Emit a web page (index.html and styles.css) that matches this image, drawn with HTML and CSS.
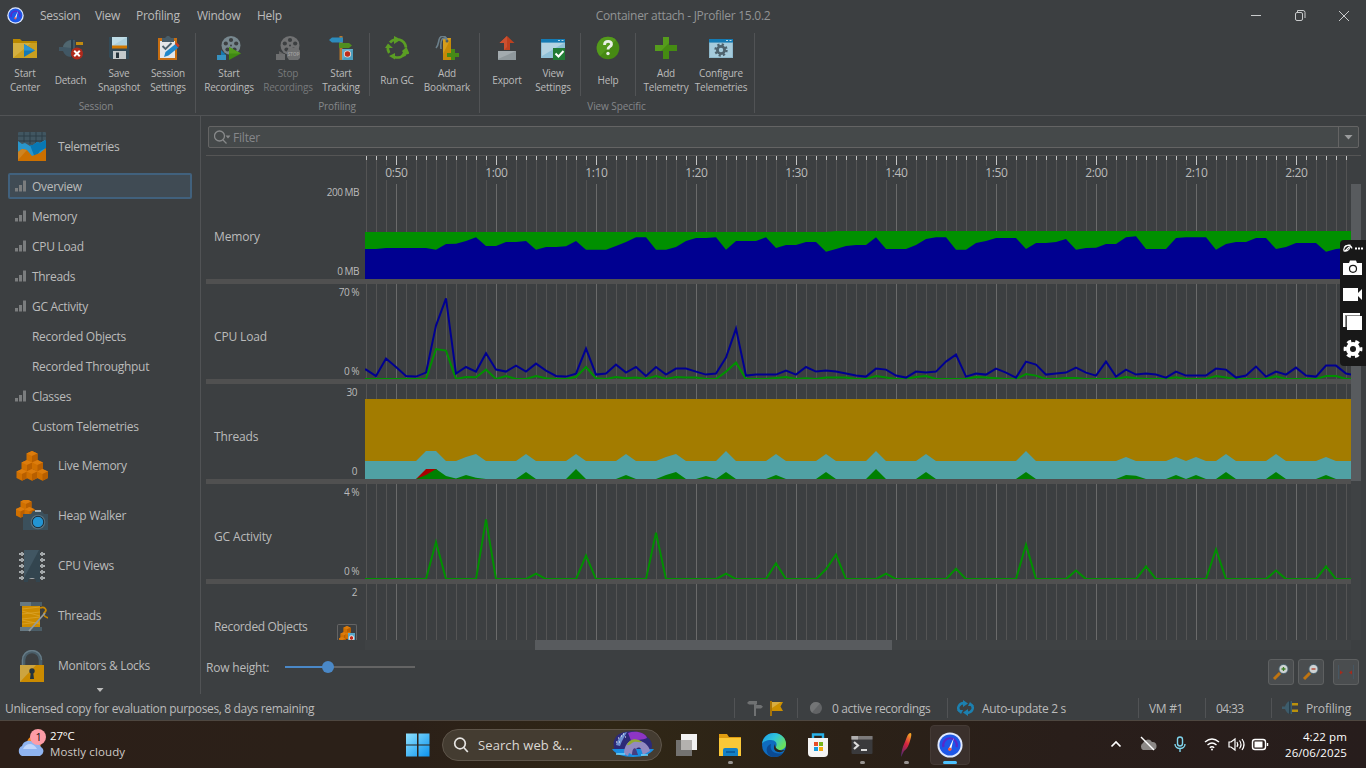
FILE: index.html
```html
<!DOCTYPE html>
<html lang="en">
<head>
<meta charset="utf-8">
<title>Container attach - JProfiler 15.0.2</title>
<link rel="stylesheet" href="styles.css">
</head>
<body>
<svg class="defs" width="0" height="0">
  <symbol id="gauge" viewBox="0 0 24 24">
    <circle cx="12" cy="12" r="11.6" fill="#dfe9ff"/><circle cx="12" cy="12" r="9.8" fill="#1d57e8"/>
    <path d="M6 14a6.3 6.3 0 1 1 12 0" fill="none" stroke="#5a28c8" stroke-width="2"/>
    <path d="M15.500 5.500 13 16h-2.400z" fill="#fff"/><circle cx="11.800" cy="16" r="1.600" fill="#ff5a3c"/>
  </symbol>
  <symbol id="bars" viewBox="0 0 12 12"><path d="M0 8h3v3.500H0zM4 5h3v6.500H4zM8 .5h3v11H8z" fill="#7b7d7e"/></symbol>
  <symbol id="cube" viewBox="0 0 12 12"><path d="M6 0l5.500 2.500v6.500L6 11.800.5 9V2.500z" fill="#d07000"/><path d="M6 0l5.500 2.500L6 5 .5 2.500z" fill="#dc7c0c"/><path d="M6 5l5.500-2.500V9L6 11.800z" fill="#b85f00"/></symbol>
  <symbol id="reel" viewBox="0 0 24 24">
    <circle cx="14" cy="9.500" r="9.500" fill="currentColor"/>
    <g fill="#3c3f41"><circle cx="14" cy="4" r="2.100"/><circle cx="19.200" cy="7.500" r="2.100"/><circle cx="17.500" cy="13.500" r="2.100"/><circle cx="10.500" cy="13.500" r="2.100"/><circle cx="8.800" cy="7.500" r="2.100"/><circle cx="14" cy="9.500" r="1"/></g>
  </symbol>
</svg>

<div class="window">
  <header class="titlebar">
    <svg class="app-icon" width="17" height="17"><use href="#gauge"/></svg>
    <nav class="menu"><span class="m1">Session</span><span class="m2">View</span><span class="m3">Profiling</span><span class="m4">Window</span><span>Help</span></nav>
    <div class="title">Container attach - JProfiler 15.0.2</div>
    <svg class="winbtns" width="110" height="16" viewBox="0 0 110 16" fill="none" stroke="#c9cbcc">
      <path d="M1 7.500h10"/><rect x="45.500" y="4.500" width="7" height="8" rx="1.500"/><path d="M47.500 4V2.500h5.500a2 2 0 0 1 2 2V10"/><path d="M89 3l10 10M99 3L89 13"/>
    </svg>
  </header>

  <section class="ribbon">
    <div class="group g1">
      <div class="btns">
        <div class="btn w50"><svg width="24" height="24" viewBox="0 0 24 24"><path d="M0 3h7l2 2h15v17H0z" fill="#b98800"/><path d="M0 7h24v15H0z" fill="#c99f20"/><path d="M0 22L18 7H0z" fill="#d4b040"/><path d="M11 8l11 6.500L11 21z" fill="#1378b5"/><path d="M11 8l11 6.500H11z" fill="#2f95cf"/></svg><span>Start<br>Center</span></div>
        <div class="btn w41"><svg width="24" height="24" viewBox="0 0 24 24"><path d="M17 6h7v3h-7z" fill="#c08a10"/><path d="M0 11h4c1-4 4-7 8-7h4v17h-4c-4 0-7-3-8-6H0z" fill="#415764"/><path d="M12 3h2v19h-2z" fill="#2c3e49"/><path d="M4 11c1-4 4-6 8-7v8z" fill="#50666f"/><circle cx="18" cy="17.500" r="6" fill="#b02a1c"/><path d="M15.200 14.700l5.600 5.600m0-5.600l-5.600 5.600" stroke="#fff" stroke-width="2"/></svg><span>Detach</span></div>
        <div class="btn w56"><svg width="24" height="24" viewBox="0 0 24 24"><path d="M2 1h20v22H4l-2-2z" fill="#334a57"/><path d="M5 1h15v10H5z" fill="#abcfdc"/><path d="M5 1h15L5 10z" fill="#bfdde7"/><path d="M5 9.500h15v3H5z" fill="#d07800"/><path d="M6 15h13v8H6z" fill="#c4cacc"/><path d="M9 16.500h3V22H9z" fill="#26343d"/></svg><span>Save<br>Snapshot</span></div>
        <div class="btn w42"><svg width="24" height="24" viewBox="0 0 24 24"><path d="M2 2h19v22H2z" fill="#c86e10"/><path d="M4 5h15v17H4z" fill="#e3e6e8"/><path d="M6 2h3l2-2h2l2 2h3v4H6z" fill="#475c68"/><path d="M6.500 10l3 3 6-6" fill="none" stroke="#4d626e" stroke-width="1.800"/><path d="M8 21l1.500-5 10-8 3 3.500-10 8z" fill="#1f87c9"/><path d="M19 8l2-1.500 2.600 3L22 11.500z" fill="#c43b23"/></svg><span>Session<br>Settings</span></div>
      </div>
      <div class="glabel">Session</div>
    </div>
    <div class="group g2">
      <div class="btns">
        <div class="btn w58"><svg class="c-reel" width="24" height="24" viewBox="0 0 24 24"><use href="#reel"/><path d="M0 19h9v5H0z" fill="#3791bf"/><path d="M4 14l5 5H4z" fill="#1678ad"/><path d="M12 11l12 6.500L12 24z" fill="#3f8a12"/><path d="M12 11l12 6.500H12z" fill="#529c1c"/></svg><span>Start<br>Recordings</span></div>
        <div class="btn w60 off"><svg class="c-off" width="24" height="24" viewBox="0 0 24 24"><use href="#reel"/><path d="M0 18h9v6H0zM13 12h9l3 4v5l-3 3h-9l-2-3v-6z" fill="#6e6f70"/><path d="M3 15l5 3H3z" fill="#666"/><text x="11.500" y="20" class="stop-text">STOP</text></svg><span>Stop<br>Recordings</span></div>
        <div class="btn w46"><svg width="24" height="24" viewBox="0 0 24 24"><path d="M10.500 0h3v24h-3z" fill="#b7762a"/><path d="M0 4l3-2.500h11v5H3z" fill="#2c8cbd"/><path d="M10 7h10l3 2.500-3 2.500H10z" fill="#508f1e"/><path d="M13 13h11v11H13z" fill="#4b9dbd"/><path d="M13 13h11L13 24z" fill="#62abc8"/><circle cx="18.500" cy="18" r="3.600" fill="#e8d8d4"/><circle cx="18.500" cy="18" r="2.700" fill="#bd2b18"/></svg><span>Start<br>Tracking</span></div>
      </div>
      <div class="btns sep">
        <div class="btn w44"><svg width="24" height="24" viewBox="0 0 24 24"><g fill="none" stroke="#5b9e24" stroke-width="2.700"><path d="M4.200 17A9.300 9.300 0 0 1 3 10"/><path d="M5 6.500a9.500 9.500 0 0 1 5-3"/><path d="M14 3.500a9.500 9.500 0 0 1 7 8"/><path d="M20.500 17a9.500 9.500 0 0 1-11 4"/></g><path d="M9 0l7 3.500L9 8zM17 15l4.500-4 3 6.500-5 1.500zM0 12l3-4.500L8 12zM10 17v6.500L4 20zM21 20l-6 1 4-6z" fill="#5b9e24"/></svg><span>Run GC</span></div>
        <div class="btn w56"><svg width="24" height="24" viewBox="0 0 24 24"><path d="M8 2h8v22H8z" fill="#c68a08"/><path d="M8 2h8L8 18z" fill="#d69d1b"/><circle cx="12" cy="5" r="1.500" fill="#4c5c64"/><path d="M12 4C11-1 5-1 4 4s-1 6-3 8M12 4C8 0 5 3 6 13" fill="none" stroke="#6b7f8a" stroke-width="1.600"/><path d="M16 13h4v4h4v4h-4v3h-4v-3h-4v-4h4z" fill="#468a16"/></svg><span>Add<br>Bookmark</span></div>
      </div>
      <div class="glabel">Profiling</div>
    </div>
    <div class="group g3">
      <div class="btns">
        <div class="btn w46"><svg width="24" height="24" viewBox="0 0 24 24"><path d="M3 15h18v9H3z" fill="#8f989c"/><path d="M3 15h18L3 23z" fill="#a3abaf"/><path d="M12 0l7.500 7H15v7H9V7H4.500z" fill="#bd401f"/><path d="M12 0L4.500 7H9v7l3-3z" fill="#cc5030"/></svg><span>Export</span></div>
        <div class="btn w46"><svg width="24" height="24" viewBox="0 0 24 24"><path d="M0 3h24v19H0z" fill="#8fc0d8"/><path d="M0 3h24v3.500H0z" fill="#147bb4"/><path d="M17 4h2v1h-2zM20.500 4h2v1h-2z" fill="#b8d8e8"/><path d="M1 7h22L1 20z" fill="#b3d3e2"/><path d="M12 12h12v12H12z" fill="#217a35"/><path d="M14.500 17.500l3 3 5-5.500" fill="none" stroke="#fff" stroke-width="2"/></svg><span>View<br>Settings</span></div>
      </div>
      <div class="btns sep help">
        <div class="btn w44"><svg width="24" height="24" viewBox="0 0 24 24"><circle cx="12" cy="12" r="11.300" fill="#468a13"/><path d="M4 20A11.300 11.300 0 0 1 20 4z" fill="#549a1c"/><path d="M8.500 9c0-5 7.500-4.500 7-.5-.3 2.300-3.500 2.300-3.500 5" fill="none" stroke="#e9efe5" stroke-width="2.800"/><circle cx="12" cy="17.500" r="1.700" fill="#e9efe5"/></svg><span>Help</span></div>
      </div>
      <div class="btns sep last">
        <div class="btn w56"><svg width="24" height="24" viewBox="0 0 24 24"><path d="M9 1h6v8h8v6h-8v8H9v-8H1V9h8z" fill="#458b12"/><path d="M9 1h6v6L7 15H1V9h8z" fill="#559c1c"/></svg><span>Add<br>Telemetry</span></div>
        <div class="btn w54"><svg width="24" height="24" viewBox="0 0 24 24"><path d="M0 3h24v19H0z" fill="#8fb9cc"/><path d="M0 3h24v3.500H0z" fill="#147bb4"/><path d="M1 7h22v14H1z" fill="#a5cbdc"/><path d="M17 4h2v1h-2zM20.500 4h2v1h-2z" fill="#b8d8e8"/><circle cx="12" cy="14" r="5.500" fill="none" stroke="#4e626d" stroke-width="2.400" stroke-dasharray="2.160 2.160"/><circle cx="12" cy="14" r="3.600" fill="none" stroke="#4e626d" stroke-width="2.800"/></svg><span>Configure<br>Telemetries</span></div>
      </div>
      <div class="glabel">View Specific</div>
    </div>
  </section>

  <div class="main">
    <aside class="sidebar">
      <div class="cat first"><svg width="32" height="32" viewBox="0 0 32 32"><rect x="2" y="2" width="28" height="29" rx="1" fill="#415661"/><path d="M8 2v10M14 2v12M20 2v12M26 2v10M2 6h28M2 11h28" stroke="#2d3d46"/><path d="M2 11l4 3 3-1 5 3 3-1 4-3 3 1 5-3v20H2z" fill="#2a96cb"/><path d="M14 15l3 0 4-3 3 1 6-3v8l-6 3-5 7z" fill="#0878b4"/><path d="M2 22l4-3 5 1 5 6 8-3 6-5v13H2z" fill="#cc7000"/><path d="M2 22l4-3 5 1L2 30z" fill="#cf8420"/></svg><span>Telemetries</span></div>
      <div class="item sel"><svg width="12" height="12"><use href="#bars"/></svg><span>Overview</span></div>
      <div class="item"><svg width="12" height="12"><use href="#bars"/></svg><span>Memory</span></div>
      <div class="item"><svg width="12" height="12"><use href="#bars"/></svg><span>CPU Load</span></div>
      <div class="item"><svg width="12" height="12"><use href="#bars"/></svg><span>Threads</span></div>
      <div class="item"><svg width="12" height="12"><use href="#bars"/></svg><span>GC Activity</span></div>
      <div class="item"><i></i><span>Recorded Objects</span></div>
      <div class="item"><i></i><span>Recorded Throughput</span></div>
      <div class="item"><svg width="12" height="12"><use href="#bars"/></svg><span>Classes</span></div>
      <div class="item"><i></i><span>Custom Telemetries</span></div>
      <div class="cat"><svg width="32" height="32" viewBox="0 0 32 32"><use href="#cube" x="10" y="1" width="12" height="12"/><use href="#cube" x="5" y="10" width="12" height="12"/><use href="#cube" x="15.500" y="10" width="12" height="12"/><use href="#cube" x="0" y="19" width="12" height="12"/><use href="#cube" x="10" y="19" width="12" height="12"/><use href="#cube" x="20.500" y="19" width="12" height="12"/></svg><span>Live Memory</span></div>
      <div class="cat"><svg width="32" height="32" viewBox="0 0 32 32"><use href="#cube" x="4" y="-1" width="12" height="12"/><use href="#cube" x="-1" y="7" width="11" height="11"/><use href="#cube" x="8" y="7" width="11" height="11"/><path d="M7 14h8l2-3h9l2 3h4v16H7z" fill="#3b505c"/><path d="M19 10h6v2h-6z" fill="#aab4b8"/><circle cx="22" cy="22" r="7.300" fill="#5a707b"/><circle cx="22" cy="22" r="5.700" fill="#2394d2" stroke="#1c2c36"/></svg><span>Heap Walker</span></div>
      <div class="cat"><svg width="32" height="32" viewBox="0 0 32 32"><path d="M3 4h26M3 10h26M3 16h26M3 22h26M3 28h26" stroke="#a7abad" stroke-width="2"/><path d="M6 2v4M26 2v4M6 8v4M26 8v4M6 14v4M26 14v4M6 20v4M26 20v4M6 26v4M26 26v4" stroke="#a0a5a7" stroke-width="2"/><path d="M8 0h16v32h-4a4 4 0 0 0-8 0H8z" fill="#33454f"/><path d="M8 0h15L8 28z" fill="#415662"/></svg><span>CPU Views</span></div>
      <div class="cat"><svg width="32" height="32" viewBox="0 0 32 32"><path d="M4 2h22v4H4zM4 27h22v4H4z" fill="#4b5d67"/><path d="M4 2h11v4H4zM4 27h11v4H4z" fill="#667983"/><path d="M6 6h18v21H6z" fill="#cc8b00"/><path d="M6 9l18-2M6 14l18-2M6 19l18-2M6 24l18-2M6 11l18 5M6 20l18 4" stroke="#dba42c" stroke-width=".8"/><path d="M24 8c5-2 7 2 5 4s-2 4 3 6" fill="none" stroke="#c98800" stroke-width="1.800"/><path d="M13 31L29 13" stroke="#929a9e" stroke-width="1.800"/></svg><span>Threads</span></div>
      <div class="cat"><svg width="32" height="32" viewBox="0 0 32 32"><path d="M7.500 16V10a8.500 8.500 0 0 1 17 0v6" fill="none" stroke="#4a5e69" stroke-width="3.600"/><path d="M6.500 16V10a9.500 9.500 0 0 1 19 0" fill="none" stroke="#677c87" stroke-width="1.300"/><path d="M4 15h24v17H4z" fill="#cb8b00"/><path d="M4 15h16L4 32z" fill="#cca440"/><circle cx="16" cy="21" r="2.700" fill="#25343d"/><path d="M15 21h2l1 8h-4z" fill="#25343d"/></svg><span>Monitors &amp; Locks</span></div>
      <div class="more"></div>
    </aside>

    <section class="content">
      <div class="filter"><svg width="17" height="15" viewBox="0 0 17 15" fill="none" stroke="#87898a"><circle cx="5.500" cy="6" r="5" stroke-width="1.300"/><path d="M9 10l3.500 3.500" stroke-width="1.300"/><path d="M11.500 5.500h5L14 8.500z" fill="#87898a" stroke="none"/></svg><span>Filter</span><div class="drop"><b></b></div></div>
      <div class="panel">
        <div class="plots">
          <div class="row axis"><div class="names"></div><svg id="axis" width="986" height="28"></svg></div>
          <div class="row"><div class="names"><span class="hi">200 MB</span><span class="nm">Memory</span><span class="lo">0 MB</span></div><svg id="memory" width="986" height="95"></svg></div>
          <div class="row"><div class="names"><span class="hi">70 %</span><span class="nm">CPU Load</span><span class="lo">0 %</span></div><svg id="cpu" width="986" height="95"></svg></div>
          <div class="row"><div class="names in"><span class="hi">30</span><span class="nm">Threads</span><span class="lo">0</span></div><svg id="threads" width="986" height="95"></svg></div>
          <div class="row"><div class="names"><span class="hi">4 %</span><span class="nm">GC Activity</span><span class="lo">0 %</span></div><svg id="gc" width="986" height="95"></svg></div>
          <div class="row cut"><div class="names in"><span class="hi">2</span><span class="nm">Recorded Objects</span><span class="rec"><svg width="16" height="16" viewBox="0 0 16 16"><use href="#cube" x="4" y="0" width="8" height="8"/><use href="#cube" x="1" y="6" width="8" height="8"/><use href="#cube" x="6" y="6" width="8" height="8"/><use href="#cube" x="-1" y="11" width="8" height="8"/><path d="M9 7h7v9H9z" fill="#58a8c8"/><circle cx="12.500" cy="12" r="2.300" fill="#c02818" stroke="#eee"/></svg></span></div><svg id="recorded" width="986" height="56"></svg></div>
        </div>
        <div class="vscroll"><b></b></div>
      </div>
      <div class="hscroll"><b></b></div>
      <div class="controls">
        <span>Row height:</span>
        <div class="slider"><i></i><b></b></div>
        <div class="zooms">
          <div class="zb"><svg width="20" height="20" viewBox="0 0 20 20"><path d="M3 17l6-6" stroke="#bf7410" stroke-width="3"/><circle cx="12.500" cy="7" r="4.600" fill="#cfd3d4" stroke="#47606d"/><path d="M10.500 7h4M12.500 5v4" stroke="#3d7d28" stroke-width="1.300"/></svg></div>
          <div class="zb"><svg width="20" height="20" viewBox="0 0 20 20"><path d="M3 17l6-6" stroke="#bf7410" stroke-width="3"/><circle cx="12.500" cy="7" r="4.600" fill="#cfd3d4" stroke="#47606d"/><path d="M10.500 7h4" stroke="#b23a22" stroke-width="1.300"/></svg></div>
          <div class="zb fit"><svg width="20" height="20" viewBox="0 0 20 20"><path d="M2.500 3v14M17.500 3v14" stroke="#465662"/><path d="M4 8.500l3 2-3 2zM16 8.500l-3 2 3 2z" fill="#a52a1c"/></svg></div>
        </div>
      </div>
    </section>
  </div>

  <footer class="status">
    <span class="license">Unlicensed copy for evaluation purposes, 8 days remaining</span>
    <div class="st s1"><svg width="40" height="18" viewBox="0 0 40 18"><path d="M7 2h2v15H7zM0 4l2-2h8v3.500H2zM7 6h7l2 1.800L14 9.500H7z" fill="#6f7172"/><path d="M23 2h2v15h-2z" fill="#a87408"/><path d="M25 3h11l-2.500 4.500L36 12H25z" fill="#cc9000"/><path d="M25 3h9L25 9z" fill="#d8ad40"/></svg></div>
    <div class="st s2"><svg width="14" height="14" viewBox="0 0 14 14"><circle cx="7" cy="7" r="6" fill="#626466"/><path d="M3 11.500A6 6 0 0 1 11 2.500z" fill="#737576"/></svg><span>0 active recordings</span></div>
    <div class="st s3"><svg width="17" height="16" viewBox="0 0 17 16"><path d="M3 11.500A6 5 0 0 1 7 3M14 4.500A6 5 0 0 1 10 13" fill="none" stroke="#1c80b0" stroke-width="2.500"/><path d="M6 0l5 3.500L6 7zM11 9v7l-5-3.500zM0 10h6l-2 4zM17 6h-6l2-4z" fill="#1c80b0"/></svg><span>Auto-update 2 s</span></div>
    <div class="st s4"><span>VM #1</span></div>
    <div class="st s5"><span>04:33</span></div>
    <div class="st s6"><svg width="16" height="16" viewBox="0 0 16 16"><path d="M10 3h6v2.500h-6zM10 9.500h6V12h-6z" fill="#ba910c"/><path d="M0 6.500h3C4 3 6 1 9 1h1v13H9c-3 0-5-2-6-5H0z" fill="#3d5c6b"/><path d="M7 1h1.500v13H7z" fill="#273e4b"/></svg><span>Profiling</span></div>
  </footer>
</div>

<div class="taskbar">
  <div class="weather"><svg width="34" height="34" viewBox="0 0 34 34"><circle cx="18" cy="15" r="7" fill="#f08a18"/><path d="M6 28a5.500 5.500 0 0 1 0-10 7 7 0 0 1 12-3 7 6 0 0 1 7 4 5 5 0 0 1-1 9z" fill="#8fb4f0"/><path d="M7 21c3-6 10-7 14 0z" fill="#c0d6fb"/><circle cx="22" cy="9" r="8" fill="#fd9ca6"/><text x="19.500" y="13" class="badge-text">1</text></svg><div><div class="temp">27°C</div><div class="cond">Mostly cloudy</div></div></div>
  <div class="apps">
    <svg class="start" width="24" height="24" viewBox="0 0 24 24"><defs><linearGradient id="wg" x2="1" y2="1"><stop stop-color="#8ee1ff"/><stop offset="1" stop-color="#0c93ee"/></linearGradient></defs><path d="M0 .5h11v11H0zM12.500 .5h11v11h-11zM0 12.500h11v11H0zM12.500 12.500h11v11h-11z" fill="url(#wg)"/></svg>
    <div class="search"><svg width="16" height="16" viewBox="0 0 16 16" fill="none" stroke="#e6e4e2" stroke-width="1.700"><circle cx="7" cy="6.500" r="5.300"/><path d="M10.800 10.500l4 4.500"/></svg><span>Search web &amp;...</span>
      <svg class="art" width="42" height="27" viewBox="0 0 42 27"><path d="M2 16C0 9 5 2 13 1c7-2 19 0 22 5 5 3 6 8 4 13H2z" fill="#2c2a78"/><path d="M16 2c8-3 18 0 19 5-5 3-9 0-15 5z" fill="#8d35c4"/><path d="M4 14c1-4 3-8 8-12l3-1c-2 4-5 8-7 14z" fill="#6f8fd0"/><path d="M6 7h1M9 5h1M7 11h1M11 3h1M13 6h1M4 11h1" stroke="#fff" stroke-width="1.200"/><path d="M0 18h42c-3 5-11 8-21 8S3 23 0 18z" fill="#188ce0"/><path d="M12 23c0-8 4-14 11-14 8 0 14 5 15 11l-7 4-2-6c-2-3-5-1-6 2l-2 4-4-2-1 3z" fill="#938ac0"/><path d="M20 24c0-5 2-8 4-6l2 6z" fill="#443d80"/><path d="M15 14c2-6 9-8 15-3-3 1-5-1-8 0s-4 4-7 3z" fill="#91a832"/><path d="M4 23h9M29 24h7" stroke="#6cd5ff" stroke-width="1.500"/></svg></div>
    <svg class="a-task" width="24" height="24" viewBox="0 0 24 24"><path d="M6 1h16v16H6z" fill="#f2f2f2"/><path d="M1 7h16v16H1z" fill="#737270"/><path d="M6 7h11v10H6z" fill="#b3b1af"/></svg>
    <div class="app"><svg width="26" height="26" viewBox="0 0 26 26"><path d="M2 2h8l2 3h12v19H2z" fill="#df9c10"/><path d="M2 6h22v18H2z" fill="#fac838"/><path d="M6 18q0-2 2-2h11q2 0 2 2v6H6z" fill="#1581c6"/><path d="M9 19h9v2H9z" fill="#0b5fa0"/></svg><i></i></div>
    <div class="app"><svg width="26" height="26" viewBox="0 0 26 26"><defs><linearGradient id="eg" x2="1" y2=".6"><stop stop-color="#1b9ce8"/><stop offset=".5" stop-color="#2fc4dc"/><stop offset="1" stop-color="#6be15a"/></linearGradient></defs><circle cx="13" cy="13" r="12" fill="#0f6cbf"/><path d="M1 12C2 4 8 1 13 1c8 0 12 6 12 11 0 4-3 6-7 6-3 0-4-1-3-3 2-4-1-7-5-7-5 0-8 2-9 4z" fill="url(#eg)"/><path d="M10 12c-2 7 4 11 12 9-2 3-5 4-9 4C5 25 3 14 10 12z" fill="#0b4a92"/><path d="M14 12c-2 4-1 7 3 8 3 .5 5-.5 7-2-1 0-4 1-6 0-3-1-4-3-4-6z" fill="#2c2418"/></svg></div>
    <div class="app"><svg width="26" height="26" viewBox="0 0 26 26"><path d="M8 8V2.500h10V8" fill="none" stroke="#27b2ea" stroke-width="2.400"/><path d="M3 6h20v15q0 4-4 4H7q-4 0-4-4z" fill="#f4f4f4"/><path d="M9 10h4v4H9z" fill="#e74c25"/><path d="M14 10h4v4h-4z" fill="#77b51a"/><path d="M9 15h4v4H9z" fill="#1599dc"/><path d="M14 15h4v4h-4z" fill="#f3aa10"/></svg></div>
    <div class="app"><svg width="26" height="26" viewBox="0 0 26 26"><rect x="2.500" y="4" width="21" height="18" rx="1" fill="#3a3a3c"/><path d="M2.500 4h21v3.500h-21z" fill="#7c7a7a"/><path d="M2.500 4H9v3.500H2.500z" fill="#b1afaf"/><path d="M5 10l4 3.500-4 3.500" fill="none" stroke="#ddd" stroke-width="2.200"/><path d="M12 18h6" stroke="#eee" stroke-width="1.800"/></svg><i></i></div>
    <div class="app"><svg width="26" height="26" viewBox="0 0 26 26"><defs><linearGradient id="fg" x1=".7" x2=".3" y2="1"><stop stop-color="#f2a024"/><stop offset=".45" stop-color="#d82340"/><stop offset="1" stop-color="#5a2a70"/></linearGradient></defs><path d="M17.500 1c2 0 0 7-1.500 11s-3.500 6-5 7l-3 6c0-4 1.500-10 3.500-14s3-10 6-10z" fill="url(#fg)"/></svg><i></i></div>
    <div class="app active"><svg width="26" height="26"><use href="#gauge"/></svg><i></i></div>
  </div>
  <div class="tray">
    <svg width="160" height="22" viewBox="0 0 160 22" fill="none" stroke="#fff" stroke-width="1.400">
      <path d="M1.500 12.500L6 8l4.500 4.500" stroke-width="1.700"/>
      <path d="M33 16a4 4 0 0 1 0-7 5 5 0 0 1 9-1 4 4 0 0 1 1 8z" fill="#8c8886" stroke="none"/><path d="M31 3l13 13"/>
      <g stroke="#7fd4ec"><rect x="67.500" y="3" width="5" height="9" rx="2.500"/><path d="M65 10c0 6 10 6 10 0M70 14v4"/></g>
      <path d="M95 8q7-6 14 0M97.500 11q4.500-4 9 0M99.800 13.800q2.200-2 4.400 0"/><circle cx="102" cy="15.500" r="1" fill="#fff" stroke="none"/>
      <path d="M119 8v5h2l4 3V5l-4 3zM127 8q1.500 2.500 0 5M129.500 6.500q3 4 0 8M132 5q4 5.500 0 11" stroke-width="1.200"/>
      <rect x="142.500" y="5.500" width="13" height="10" rx="2.500"/><path d="M144.500 7.500h8v6h-8z" fill="#fff" stroke="none"/><path d="M157.500 9v3"/>
    </svg>
    <div class="clock">4:22 pm<br>26/06/2025</div>
  </div>
</div>

<div class="capture">
  <svg width="26" height="126" viewBox="0 0 26 126">
    <path d="M4 11c-1-3 2-6 6-6 1 3-2 7-6 6zM5 11l4-4M4 7.500c2-3 7-3 8 1" fill="none" stroke="#fff" stroke-width="1.100"/>
    <path d="M15 7.500h2v2h-2zM18 7.500h2v2h-2zM21 7.500h2v2h-2z" fill="#fff"/>
    <path d="M3 23h6l1-2.500h6l1 2.500h5v12H3z" fill="#fff"/><circle cx="13" cy="28.800" r="3.500" fill="#fff" stroke="#181818" stroke-width="1.200"/>
    <path d="M3 48h15v13H3zM18 53l4-4v11l-4-4z" fill="#fff"/>
    <path d="M3 73h17v2H5.500v12H3z" fill="#fff"/><path d="M5.500 75H20v1H6.500v11h-1z" fill="#888"/><path d="M7 76h15v14H7z" fill="#fff"/>
    <circle cx="13" cy="109" r="7.800" fill="none" stroke="#fff" stroke-width="3.200" stroke-dasharray="4.080 4.080" stroke-dashoffset="2"/><circle cx="13" cy="109" r="5" fill="none" stroke="#fff" stroke-width="4"/>
  </svg>
</div>
<script src="charts.js"></script>
</body>
</html>
```
FILE: styles.css
```css
* { box-sizing: border-box; }
body { margin: 0; width: 1366px; height: 768px; overflow: hidden; background: #3c3f41; color: #bbb; font: 12px/16px "Open Sans", "Noto Sans", sans-serif; letter-spacing: -0.2px; position: relative; }
svg { display: block; flex: none; }
.defs { position: absolute; }
.window { height: 720px; display: flex; flex-direction: column; }

.titlebar { height: 31px; display: flex; align-items: center; position: relative; padding-left: 7px; }
.app-icon { margin-right: 16px; }
.menu { display: flex; letter-spacing: -0.3px; }
.m1 { width: 55px; } .m2 { width: 41px; } .m3 { width: 61px; } .m4 { width: 60px; }
.title { position: absolute; left: 0; right: 0; text-align: center; color: #929495; letter-spacing: -0.28px; }
.winbtns { margin-left: auto; margin-right: 6px; }

.ribbon { height: 85px; border-bottom: 1px solid #515355; display: flex; padding-top: 2px; }
.group { display: grid; grid-template-rows: 63px 17px; border-right: 1px solid #515355; height: 80px; }
.g1 { width: 196px; grid-template-columns: auto; }
.g2 { width: 284px; padding-left: 4px; grid-template-columns: 164px auto; }
.g3 { width: 275px; padding-left: 4px; grid-template-columns: 92px 54px auto; }
.btns { display: flex; grid-row: 1; padding-top: 4px; }
.btns.sep { border-left: 1px solid #515355; margin-left: 5px; padding-left: 5px; }
.btns.sep.help { margin-left: 4px; }
.btns.last { padding-left: 2px; }
.glabel { grid-row: 2; grid-column: 1 / -1; text-align: center; font-size: 10px; line-height: 21px; color: #85878a; letter-spacing: -0.1px; padding-right: 5px; }
.g1 .glabel { padding-right: 3px; }
.btn { display: flex; flex-direction: column; align-items: center; text-align: center; font-size: 10px; line-height: 14px; letter-spacing: -0.2px; white-space: nowrap; height: 59px; }
.btn svg { margin-top: -1px; }
.btn span { flex: 1; display: flex; align-items: center; padding-top: 3px; }
.btn.off { color: #77797b; }
.w41 { width: 41px; } .w42 { width: 42px; } .w44 { width: 44px; } .w46 { width: 46px; } .w50 { width: 50px; } .w54 { width: 54px; } .w56 { width: 56px; } .w58 { width: 58px; } .w60 { width: 60px; }
.c-reel { color: #78888f; } .c-off { color: #707172; }
.stop-text { font: bold 5px "Open Sans", sans-serif; fill: #999; }

.main { height: 579px; display: flex; }
.sidebar { width: 201px; height: 578px; border-right: 1px solid #515355; display: flex; flex-direction: column; letter-spacing: -0.3px; }
.cat { height: 50px; display: flex; align-items: center; padding-left: 16px; gap: 10px; }
.cat.first { height: 55px; padding-top: 6px; letter-spacing: -0.4px; }
.cat.first svg { margin-top: -1px; }
.item { height: 26px; margin: 2px 8px; padding-left: 6px; display: flex; align-items: center; gap: 5px; border: 1px solid transparent; }
.item span { padding-top: 1px; }
.item i { width: 12px; }
.item.sel { background: #404b54; border: 2px solid #41617d; border-radius: 2px; padding-left: 5px; }
.more { width: 7px; height: 4px; margin: -3px auto 0; background: #bbb; clip-path: polygon(0 0, 100% 0, 50% 100%); }

.content { flex: 1; padding: 10px 5px 0; }
.filter { height: 22px; margin: 0 2px; border: 1px solid #646464; background: #45494a; border-radius: 2px; display: flex; align-items: center; padding-left: 5px; gap: 2px; color: #85878a; }
.filter span { padding-top: 2px; }
.drop { margin-left: auto; align-self: stretch; width: 20px; border-left: 1px solid #646464; display: flex; align-items: center; justify-content: center; }
.drop b { width: 9px; height: 5px; background: #9a9c9d; clip-path: polygon(0 0, 100% 0, 50% 100%); }
.panel { margin-top: 7px; border-top: 1px solid #555; height: 485px; display: flex; overflow: hidden; }
.plots { width: 1145px; }
.row { display: flex; height: 100px; border-bottom: 5px solid #505050; }
.row.axis { height: 28px; border: 0; }
.row.cut { height: 56px; border: 0; }
.names { width: 159px; height: 95px; display: grid; grid-template-columns: 1fr auto; grid-template-rows: 17px 1fr 16px; padding: 0 6px 0 8px; }
.axis .names { height: 28px; }
.hi, .lo { grid-column: 2; font-size: 10px; text-align: right; letter-spacing: -0.5px; line-height: 17px; }
.lo { grid-row: 3; }
.in .hi, .in .lo { padding-right: 2px; }
.nm { grid-row: 2; grid-column: 1; align-self: center; padding-top: 9px; white-space: nowrap; letter-spacing: -0.15px; }
.cut .names { height: 56px; grid-template-rows: 17px 1fr; }
.cut .nm { padding-top: 11px; letter-spacing: -0.33px; }
.rec { grid-row: 2; grid-column: 2; justify-self: end; width: 20px; height: 17px; margin: 23px 2px 0 0; border: 1px solid #646464; border-bottom: 0; border-radius: 2px 2px 0 0; padding: 1px; overflow: hidden; align-self: end; }
.vscroll { width: 10px; margin-top: 28px; background: #3f4244; }
.vscroll b { display: block; height: 297px; background: #585b5e; }
.hscroll { height: 10px; width: 986px; margin-left: 159px; background: #3f4244; padding-left: 170px; }
.hscroll b { display: block; width: 357px; height: 10px; background: #585b5e; }
.tick { font: 12px "Open Sans", sans-serif; fill: #bbb; letter-spacing: -0.4px; }
.controls { display: flex; align-items: center; height: 34px; }
.controls > span { width: 64px; padding-top: 1px; white-space: nowrap; }
.slider { width: 130px; height: 12px; margin-left: 15px; display: grid; align-items: center; }
.slider i { grid-area: 1/1; height: 2px; background: linear-gradient(90deg, #4a88c7 43px, #646464 43px); }
.slider b { grid-area: 1/1; width: 12px; height: 12px; border-radius: 6px; background: #4a88c7; margin-left: 37px; }
.zooms { margin-left: auto; margin-right: 2px; display: flex; gap: 4px; padding-top: 10px; }
.zb { width: 26px; height: 26px; border: 1px solid #5e6061; border-radius: 3px; background: #4a4d4f; padding: 2px; }
.zb.fit { margin-left: 5px; }

.status { height: 25px; display: flex; align-items: center; padding-left: 5px; }
.license { width: 729px; letter-spacing: -0.35px; padding-top: 2px; }
.st { height: 20px; border-left: 1px solid #515355; display: flex; align-items: center; }
.st span { padding-top: 2px; }
.s1 { width: 63px; padding-left: 12px; }
.s2 { width: 150px; padding-left: 11px; gap: 9px; letter-spacing: -0.35px; }
.s3 { width: 191px; padding-left: 9px; gap: 8px; letter-spacing: -0.33px; }
.s4 { width: 67px; padding-left: 10px; letter-spacing: -0.3px; }
.s5 { width: 66px; padding-left: 10px; letter-spacing: -0.6px; }
.s6 { padding-left: 10px; gap: 8px; letter-spacing: -0.15px; }

.taskbar { height: 48px; border-top: 1px solid #4e4740; background: linear-gradient(90deg, #2c1f18 0%, #2b2018 22%, #2b2018 30%, #302716 45%, #2b2117 62%, #291e1a 78%, #271d1c 100%); display: flex; align-items: center; position: relative; color: #fff; }
.weather { display: flex; width: 406px; padding-left: 16px; font-size: 11.500px; letter-spacing: -0.2px; }
.cond { color: #cfcac6; letter-spacing: 0.12px; }
.badge-text { font: 11px "Open Sans", sans-serif; fill: #111; }
.apps { display: flex; align-items: center; height: 47px; }
.search { width: 220px; height: 32px; margin-left: 12px; border-radius: 16px; border: 1px solid #5e554a; background: #443c31; display: flex; align-items: center; padding-left: 10px; color: #dcd8d3; font-size: 13px; letter-spacing: 0.1px; }
.search span { margin-left: 9px; }
.art { margin-left: auto; margin-right: 5px; width: 46px; }
.a-task { margin: 0 11px 0 13px; }
.app { width: 40px; height: 40px; margin-right: 4px; display: flex; flex-direction: column; align-items: center; padding-top: 7px; border-radius: 4px; }
.app i { width: 5px; height: 3px; border-radius: 2px; background: #979390; margin-top: 3px; }
.app.active { background: #3a302c; border: 1px solid #443a35; padding-top: 6px; }
.active i { width: 14px; background: #4cc2ff; }
.tray { margin-left: auto; display: flex; align-items: center; margin-right: 19px; }
.clock { width: 77px; text-align: right; font-size: 11.500px; line-height: 16px; letter-spacing: 0.1px; white-space: nowrap; }
.capture { position: absolute; left: 1340px; top: 240px; width: 26px; height: 126px; background: #181818; border-radius: 4px 0 0 4px; }
```
FILE: charts.js
```js
const NS = 'http://www.w3.org/2000/svg';
const COUNT = 100;
const BASE = 95;

function add(svg, tag, attrs, text) {
  const el = document.createElementNS(NS, tag);
  for (const k in attrs) el.setAttribute(k, attrs[k]);
  if (text) el.textContent = text;
  svg.appendChild(el);
}

function grid(svg, height) {
  for (let x = 1; x < 986; x += 10) {
    const major = (x - 31) % 100 === 0;
    add(svg, 'rect', { x, y: 0, width: 1, height, fill: major ? '#6a6a6a' : '#545454' });
  }
}

// Expands {index: height} into a full series, using rest for every other sample.
function series(map, rest) {
  return Array.from({ length: COUNT }, (_, i) => (i in map ? map[i] : rest));
}

const pts = (values, base) => values.map((v, i) => `${i * 10 + 1},${base - v}`).join(' ');

function area(svg, values, fill) {
  add(svg, 'polygon', { points: `0,${BASE} 0,${BASE - values[0]} ${pts(values, BASE)} 991,${BASE}`, fill });
}

function line(svg, values, stroke) {
  const base = BASE + 0.3;
  add(svg, 'polyline', { points: `-1,${base - values[0]} ${pts(values, base)}`, fill: 'none', stroke, 'stroke-width': 2 });
}

const axis = document.getElementById('axis');
for (let x = 1, n = 0; x < 986; x += 10, n++) {
  const major = (x - 31) % 100 === 0;
  add(axis, 'rect', { x, y: 0, width: 1, height: major ? 9 : 4, fill: '#c4c4c4' });
  if (!major) add(axis, 'rect', { x, y: 4, width: 1, height: 24, fill: '#545454' });
}
['0:50', '1:00', '1:10', '1:20', '1:30', '1:40', '1:50', '2:00', '2:10', '2:20'].forEach((t, i) => {
  add(axis, 'rect', { x: 20 + i * 100, y: 10, width: 23, height: 14, fill: '#3c3f41' });
  add(axis, 'text', { x: 31.3 + i * 100, y: 21, 'text-anchor': 'middle', class: 'tick' }, t);
});

const memory = document.getElementById('memory');
const cpu = document.getElementById('cpu');
const threads = document.getElementById('threads');
const gc = document.getElementById('gc');
[memory, cpu, threads, gc].forEach((s) => grid(s, BASE));
grid(document.getElementById('recorded'), 56);

add(memory, 'polygon', { points: '0,95 0,48 461,48 471,47 986,47 986,95', fill: '#009000' });
area(memory, [30, 30, 31, 31, 31, 31, 31, 29.3, 35, 35.3, 38, 41.7, 33, 33, 37, 37, 38, 29.3, 32, 32, 32.7, 38, 29.3, 29.3, 29.3,
  33, 37, 41.7, 41.7, 29.3, 29.3, 32, 38, 41, 41, 41.7, 29.3, 38, 38, 38, 41.7, 31, 34, 34, 37, 37, 27.3, 30, 33, 34,
  34, 41.7, 30, 30, 30, 34, 40, 41.7, 41.7, 29.3, 29.3, 36, 38, 41, 41, 41, 30, 36, 36, 37, 40, 29.3, 31, 31.3, 35,
  35, 41.7, 42.7, 30, 30, 30, 41, 41.7, 41.7, 41.7, 29.3, 35, 37, 37, 41, 41, 30, 32, 36, 36, 36, 27.3, 30, 31, 31], '#000090');

line(cpu, series({ 7: 30.3, 8: 28.7, 10: 2.3, 11: 2, 12: 9.7, 14: 3.3, 17: 3.3, 18: 1, 21: 2.3, 22: 12.3, 23: 1, 25: 2.3, 26: 1,
  27: 1.7, 29: 3.3, 31: 2.3, 32: 1.7, 33: 1.7, 36: 7.7, 37: 16.7, 41: 1.3, 42: 2.3, 44: 1, 46: 1.7, 47: 1.7, 48: 1.7, 51: 3.3,
  52: 1.7, 55: 2.3, 56: 3.3, 61: 2.3, 62: 1.7, 63: 1, 66: 5.3, 67: 3.7, 70: 1.3, 71: 1.3, 76: 2.3, 77: 1, 81: 2, 85: 3.3,
  86: 1.7, 91: 3, 96: 3.3, 97: 3.3 }, 0.3), '#009000');
line(cpu, [9.7, 3.3, 20.7, 12.3, 3.3, 2.7, 6.7, 53.7, 81, 5.7, 12.3, 7.7, 26, 9.7, 7.7, 13.7, 7.7, 15.7, 8.7, 3.3, 2.7, 5.7, 30.7, 4.7, 5.7,
  14.7, 6.7, 12.3, 3.3, 12.3, 4.7, 10.7, 10.7, 7.7, 4.7, 5.7, 21.7, 50.7, 3.7, 4.7, 4.7, 4.7, 8.7, 4.7, 12.3, 7.7, 8.7, 7.7, 5.7, 3.7,
  2.7, 10.7, 9.7, 3.7, 1.7, 7.7, 6.7, 7.7, 17.7, 24.7, 2.7, 5.7, 4.7, 10.7, 6.7, 1.7, 17.7, 14.7, 4.7, 5.7, 6.7, 11.7, 6.7, 3.7, 17.7,
  2.7, 9.7, 4.7, 5.7, 4.7, 1.7, 7.7, 3.7, 3.7, 3.7, 10.7, 9.7, 1.7, 3.7, 12.7, 2.7, 7.7, 4.7, 11.7, 3.7, 2.7, 13.7, 13.7, 5.7, 3.7], '#000090');

add(threads, 'rect', { x: 0, y: 15, width: 986, height: 80, fill: '#a37c00' });
area(threads, series({ 6: 28, 7: 28, 10: 22, 11: 25, 16: 25, 21: 25, 26: 25, 30: 22, 31: 25, 36: 28, 41: 25, 46: 25, 51: 28, 56: 25,
  66: 28, 76: 22, 81: 22, 83: 22, 86: 25, 91: 25, 96: 22 }, 18), '#50a1a4');
area(threads, series({ 6: 10, 7: 10 }, 0), '#a80000');
area(threads, series({ 6: 4, 7: 10, 8: 3, 9: 0.5, 10: 4, 11: 1.3, 16: 7, 21: 10, 26: 4, 30: 4, 31: 7, 34: 3, 36: 7, 41: 4, 46: 7, 51: 10,
  56: 7, 66: 7, 76: 4, 77: 3.2, 81: 4, 83: 4, 86: 7, 91: 7, 96: 4 }, 0), '#008000');

line(gc, series({ 7: 37.3, 12: 60, 17: 5.7, 22: 23.7, 29: 46.7, 36: 5.7, 41: 16, 46: 10, 47: 24.7, 52: 5.7, 59: 10.7, 66: 34.7, 71: 8.7,
  78: 13, 85: 30, 91: 8.7, 96: 13 }, 0.2), '#009000');
```
